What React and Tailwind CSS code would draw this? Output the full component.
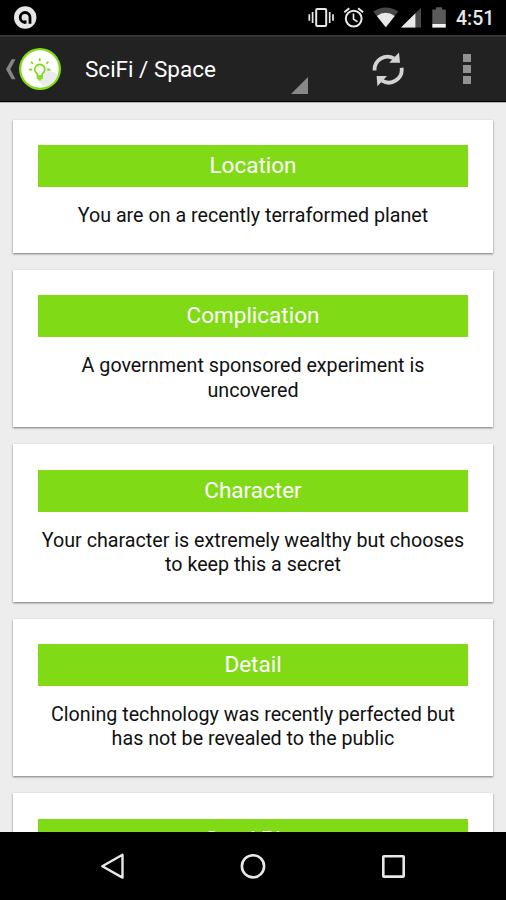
const cards = [
  { title: 'Location', lines: ['You are on a recently terraformed planet'] },
  { title: 'Complication', lines: ['A government sponsored experiment is', 'uncovered'] },
  { title: 'Character', lines: ['Your character is extremely wealthy but chooses', 'to keep this a secret'] },
  { title: 'Detail', lines: ['Cloning technology was recently perfected but', 'has not be revealed to the public'] },
  { title: 'Send Plot', lines: [] },
];

function StatusBar() {
  return (
    <div className="h-[35px] shrink-0 flex items-center justify-between bg-black pl-[14px] pr-[12px]">
      <svg width="23" height="23" viewBox="0 0 23 23" fill="none">
        <circle cx="11.2" cy="11.5" r="11.2" fill="#e6e6e6" />
        <path d="M11 16.3A4.9 4.9 0 1 1 16 11.4V17.7" stroke="#000" strokeWidth="2.8" />
        <path d="M11.4 9.6a2.4 2.4 0 1 0 0 4.8" stroke="#e6e6e6" strokeWidth="1" />
        <path d="M11.3 14.4v3.3" stroke="#000" strokeWidth="2.4" />
      </svg>
      <div className="flex items-center">
        {/* vibrate, alarm, wifi, signal, battery */}
        <svg width="142" height="24" viewBox="306 6 142 24" fill="none">
          <rect x="316.2" y="8.9" width="10" height="17.2" rx="1" stroke="#e8e8e8" strokeWidth="2" />
          <path d="M309.3 14.3v6.4M312.6 12v11M329.7 12v11M333 14.3v6.4" stroke="#e8e8e8" strokeWidth="1.7" />
          <circle cx="353.7" cy="18.6" r="7.9" stroke="#e8e8e8" strokeWidth="2" />
          <path d="M353.5 13.6v5.5l4 2.6" stroke="#e8e8e8" strokeWidth="1.7" />
          <path d="M344.3 12.3l5-4.1M363.1 12.3l-5-4.1" stroke="#e8e8e8" strokeWidth="2" />
          <path d="M385.8 27.3L373.3 11.6Q385.8 3.2 398.2 11.6Z" fill="#484848" />
          <path d="M385.8 27.3L376.8 16Q385.8 9.4 394.7 16Z" fill="#e8e8e8" />
          <path d="M401 27.6L421 7.7V27.6Z" fill="#484848" />
          <path d="M401 27.6L415.4 13.3V27.6Z" fill="#e8e8e8" />
          <path d="M432.3 9.4h3.6V7.3h6.2v2.1h3.7v14.7h-13.5Z" fill="#5a5a5a" />
          <path d="M432.3 24h13.5v3.6h-13.5Z" fill="#f2f2f2" />
        </svg>
        <span className="ml-[8px] mt-[3px] w-[38px] whitespace-nowrap text-[19.5px] leading-6 font-medium text-[#e6e6e6]">4:51</span>
      </div>
    </div>
  );
}

function ActionBar() {
  return (
    <div className="h-[67px] shrink-0 flex items-center bg-[#222] border-t-2 border-t-[#343434] border-b border-b-black pl-[5px]">
      <svg width="57" height="46" viewBox="5 46 57 46" fill="none">
        <path d="M15.5 59.2H11.7L6 69.2L11.7 79.2H15.5L10.3 69.2Z" fill="#858585" />
        <circle cx="40" cy="69" r="21" fill="#80db16" />
        <circle cx="40" cy="69" r="18.7" fill="#fff" />
        <path d="M44.5 65.2L57.8 74.8A18.7 18.7 0 0 1 44 87.2L37.3 79.5L36.5 73Z" fill="#ebebeb" />
        <path d="M37.3 76.1V73.7A5 5 0 1 1 42.2 73.7V76.1Z" stroke="#80db16" strokeWidth="1.6" fill="#f5f5f5" />
        <path d="M36.7 78.1h6.2" stroke="#80db16" strokeWidth="1.8" />
        <path d="M38.3 79.8h3" stroke="#80db16" strokeWidth="1.2" />
        <path d="M39.7 58.2v3M31 61.8l2 2M48.4 61.8l-2 2M29 69.6h3.2M50.4 69.6h-3.2" stroke="#80db16" strokeWidth="1.7" />
      </svg>
      {/* category spinner */}
      <div className="ml-[23px] h-full w-[223px] flex items-center justify-between">
        <span className="whitespace-nowrap text-[22.5px] leading-7 text-white">SciFi / Space</span>
        <svg className="self-end mb-[7px]" width="17" height="17" viewBox="0 0 17 17">
          <path d="M17 0V17H0Z" fill="#888" />
        </svg>
      </div>
      <svg className="ml-[63px]" width="34" height="36" viewBox="371 51 34 36" fill="none">
        <path d="M374.6 70.5A13 13 0 0 1 394 58.4M401.6 67.8A13 13 0 0 1 382 80.7" stroke="#d3d3d3" strokeWidth="3.8" />
        <path d="M399 52.4L400 62.8H389.2Z" fill="#d3d3d3" />
        <path d="M376.6 76H387L377.4 86.3Z" fill="#d3d3d3" />
      </svg>
      <div className="ml-[58px] flex flex-col gap-[3.5px]">
        <span className="size-[7.5px] bg-[#929292]" />
        <span className="size-[7.5px] bg-[#929292]" />
        <span className="size-[7.5px] bg-[#929292]" />
      </div>
    </div>
  );
}

function PlotCard({ title, lines }) {
  return (
    <div className="shrink-0 bg-white px-[25px] pt-[25.3px] pb-[24.65px] shadow-[0_1px_2px_rgba(0,0,0,0.5)]">
      <h2 className="h-[42px] bg-[#80db16] text-center text-[22.5px] leading-[40px] text-white">{title}</h2>
      <div className="mt-[17.2px] text-center text-[19.7px] leading-[24.1px] text-[#111]">
        {lines.map((line) => (
          <p key={line} className="whitespace-nowrap">{line}</p>
        ))}
      </div>
    </div>
  );
}

function NavBar() {
  return (
    <div className="h-[68px] shrink-0 flex items-center justify-between bg-black px-[99px]">
      <svg width="28" height="30" viewBox="99 851 28 30" fill="none">
        <path d="M122.5 854.8V877.6L102.3 866.2Z" stroke="#e8e8e8" strokeWidth="2.4" strokeLinejoin="round" />
      </svg>
      <svg width="28" height="30" viewBox="239 851 28 30" fill="none">
        <circle cx="253" cy="866.3" r="11.1" stroke="#e8e8e8" strokeWidth="2.6" />
      </svg>
      <svg width="28" height="30" viewBox="379 851 28 30" fill="none">
        <rect x="383.3" y="856.2" width="20.4" height="20.4" rx="0.6" stroke="#e8e8e8" strokeWidth="2.6" />
      </svg>
    </div>
  );
}

export default function App() {
  return (
    <div className="w-[506px] h-[900px] flex flex-col overflow-hidden font-['Roboto',sans-serif]">
      <StatusBar />
      <ActionBar />
      <main className="flex-1 min-h-0 overflow-hidden flex flex-col gap-[17.1px] border-t border-t-[#b5b5b5] bg-[#ededed] px-[13px] pt-[16.7px]">
        {cards.map((card) => (
          <PlotCard key={card.title} {...card} />
        ))}
      </main>
      <NavBar />
    </div>
  );
}
